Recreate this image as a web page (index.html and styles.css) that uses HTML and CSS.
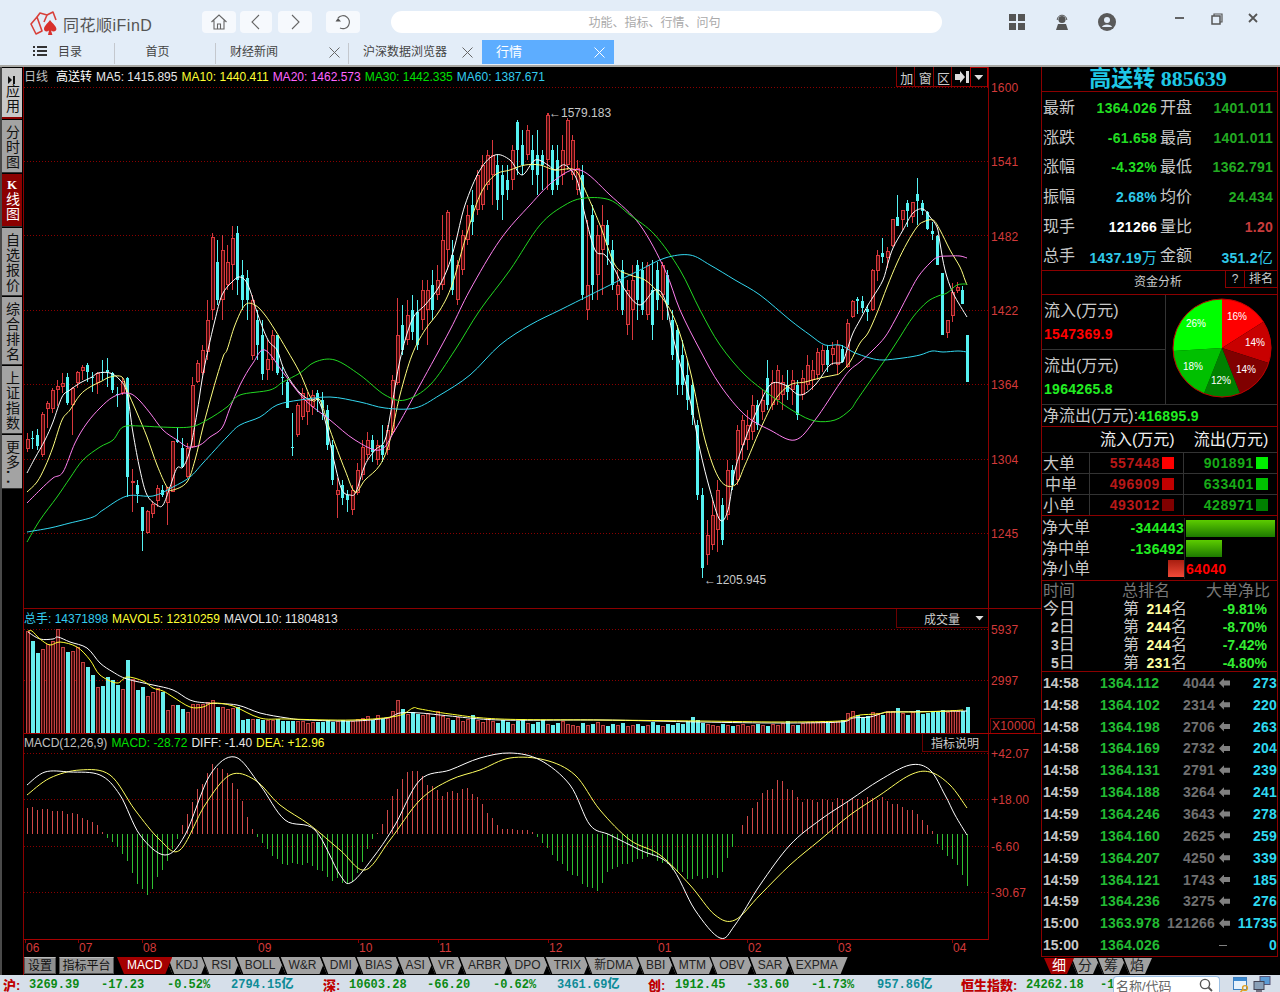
FILE: index.html
```html
<!DOCTYPE html>
<html lang="zh">
<head>
<meta charset="utf-8">
<title>同花顺iFinD</title>
<link rel="stylesheet" href="styles.css">
</head>
<body>
<div class="app">
  <header class="top">
    <div class="bar">
      <div class="brand">
        <svg class="logo" viewBox="0 0 28 24"><g fill="none" stroke="#d8403a" stroke-width="1.6" stroke-linejoin="round"><path d="M1 13 L7 6 L12 20 L6 23 Z"/><path d="M7 6 L10 2 L17 4 L14 11"/><path d="M17 4 L23 1 L26 9"/></g><path fill="#d8302c" d="M20 9 C17 13 14 15 14 18 C14 20.6 17 21.2 19 19.4 L18 24 H22.4 L21 19.4 C23 21.2 26.4 20.6 26.4 18 C26.4 15 23 13 20 9 Z"/></svg>
        <span class="brand-name">同花顺iFinD</span>
      </div>
      <button class="nav nav-home"><svg viewBox="0 0 18 18"><path d="M1.5 9 L9 2 L16.5 9 M4 7.5 V16 H14 V7.5 M7.5 16 V11 H10.5 V16" fill="none" stroke="#666" stroke-width="1.1"/></svg></button>
      <button class="nav nav-back"><svg viewBox="0 0 18 18"><path d="M12 2 L5 9 L12 16" fill="none" stroke="#666" stroke-width="1.1"/></svg></button>
      <button class="nav nav-fwd"><svg viewBox="0 0 18 18"><path d="M6 2 L13 9 L6 16" fill="none" stroke="#666" stroke-width="1.1"/></svg></button>
      <button class="nav nav-ref"><svg viewBox="0 0 18 18"><path d="M4 5 A6.5 6.5 0 1 1 6 15" fill="none" stroke="#666" stroke-width="1.2"/><path d="M1.5 8.5 L7 8.5 L4 5 Z" fill="#555"/></svg></button>
      <div class="search">功能、指标、行情、问句</div>
      <svg class="ico ico-grid" viewBox="0 0 16 16"><path fill="#555" d="M0 0h7v7H0zM9 0h7v7H9zM0 9h7v7H0zM9 9h7v7H9z"/></svg>
      <svg class="ico ico-help" viewBox="0 0 16 16"><circle cx="8" cy="5.5" r="3.6" fill="#555"/><path d="M3.2 6 A4.8 4.8 0 0 1 12.8 6" fill="none" stroke="#555"/><path fill="#555" d="M2 16 L4 10 H12 L14 16 Z"/></svg>
      <svg class="ico ico-user" viewBox="0 0 18 18"><circle cx="9" cy="9" r="9" fill="#5a5a5a"/><circle cx="9" cy="7" r="3" fill="#e3edf8"/><path fill="#e3edf8" d="M4 14 C4.5 10.5 13.5 10.5 14 14 Z"/></svg>
      <svg class="win win-min" viewBox="0 0 10 12"><path d="M0 6h10" stroke="#555" stroke-width="2"/></svg>
      <svg class="win win-res" viewBox="0 0 12 12"><path d="M3 3V1H11V9H9" fill="none" stroke="#555" stroke-width="1.2"/><rect x="1" y="3" width="8" height="8" fill="none" stroke="#555" stroke-width="1.5"/></svg>
      <svg class="win win-cls" viewBox="0 0 10 10"><path d="M1 1L9 9M9 1L1 9" stroke="#555" stroke-width="1.8"/></svg>
    </div>
    <nav class="tabs">
      <div class="t t-menu"><svg class="list" viewBox="0 0 14 12"><path fill="#333" d="M0 1h2v2H0zM4 1h10v2H4zM0 5h2v2H0zM4 5h10v2H4zM0 9h2v2H0zM4 9h10v2H4z"/></svg>目录</div>
      <div class="t t-home">首页</div>
      <div class="t t-x">财经新闻<svg class="x" viewBox="0 0 11 11"><path d="M.5 .5L10.5 10.5M10.5 .5L.5 10.5" stroke="#666"/></svg></div>
      <div class="t t-x">沪深数据浏览器<svg class="x" viewBox="0 0 11 11"><path d="M.5 .5L10.5 10.5M10.5 .5L.5 10.5" stroke="#666"/></svg></div>
      <div class="t t-x t-on">行情<svg class="x" viewBox="0 0 11 11"><path d="M.5 .5L10.5 10.5M10.5 .5L.5 10.5" stroke="#fff"/></svg></div>
    </nav>
  </header>

  <main class="body">
    <aside class="side">
      <div class="s s-app"><svg class="s-ic" viewBox="0 0 8 8"><path fill="#111" d="M0 0L4 4L0 8ZM5 0H7V8H5Z"/></svg><span class="vt">应用</span></div>
      <div class="s s-fs"><span class="vt">分时图</span></div>
      <div class="s s-k"><b class="k">K</b><span class="vt">线图</span></div>
      <div class="s s-4"><span class="vt">自选报价</span></div>
      <div class="s s-4"><span class="vt">综合排名</span></div>
      <div class="s s-4"><span class="vt">上证指数</span></div>
      <div class="s s-more"><span class="vt">更多</span><b class="dots">. .</b></div>
    </aside>

    <section class="center">
      <div class="pane pane-main">
        <div class="plot">
          <svg id="kline" class="chart" viewBox="24 67 964 541" width="964" height="541"></svg>
          <div class="phead phead-low"><span class="gy">日线</span><span class="wt name">高送转</span><span class="m lw">MA5: 1415.895</span><span class="m ly">MA10: 1440.411</span><span class="m lp">MA20: 1462.573</span><span class="m lg">MA30: 1442.335</span><span class="m lc">MA60: 1387.671</span></div>
          <div class="tools"><span class="tool">加</span><span class="tool">窗</span><span class="tool">区</span><span class="tool"><svg viewBox="0 0 14 12" width="14" height="12"><path fill="#ddd" d="M0 3H5V0L10 6L5 12V9H0ZM11 0H14V12H11Z"/></svg></span><span class="tool tool-dd"><i class="dd"></i></span></div>
          <span class="note note-hi">←1579.183</span>
          <span class="note note-lo">←1205.945</span>
        </div>
        <div class="axis ax-main"><span>1600</span><span>1541</span><span>1482</span><span>1422</span><span>1364</span><span>1304</span><span>1245</span></div>
      </div>
      <div class="pane pane-vol">
        <div class="plot">
          <svg id="vol" class="chart" viewBox="24 609 964 124" width="964" height="124"></svg>
          <div class="phead phead-low"><span class="lc">总手: 14371898</span><span class="m ly">MAVOL5: 12310259</span><span class="m lw">MAVOL10: 11804813</span></div>
          <div class="pick pick-vol">成交量<i class="dd"></i></div>
        </div>
        <div class="axis ax-vol"><span>5937</span><span>2997</span><span class="unit">X10000</span></div>
      </div>
      <div class="pane pane-macd">
        <div class="plot plot-end">
          <svg id="macd" class="chart" viewBox="24 734 964 205" width="964" height="205"></svg>
          <div class="phead"><span class="gy">MACD(12,26,9)</span><span class="m lg">MACD: -28.72</span><span class="m lw">DIFF: -1.40</span><span class="m ly">DEA: +12.96</span></div>
          <div class="pick pick-macd">指标说明</div>
        </div>
        <div class="axis ax-macd"><span>+42.07</span><span>+18.00</span><span>-6.60</span><span>-30.67</span></div>
      </div>
      <div class="dates"><span>06</span><span>07</span><span>08</span><span>09</span><span>10</span><span>11</span><span>12</span><span>01</span><span>02</span><span>03</span><span>04</span></div>
      <div class="itabs">
        <span class="ib">设置</span><span class="ib ib2">指标平台</span>
        <span class="it it-on">MACD</span><span class="it">KDJ</span><span class="it">RSI</span><span class="it">BOLL</span><span class="it">W&amp;R</span><span class="it">DMI</span><span class="it">BIAS</span><span class="it">ASI</span><span class="it">VR</span><span class="it">ARBR</span><span class="it">DPO</span><span class="it">TRIX</span><span class="it">新DMA</span><span class="it">BBI</span><span class="it">MTM</span><span class="it">OBV</span><span class="it">SAR</span><span class="it">EXPMA</span>
      </div>
    </section>

    <aside class="right">
      <div class="frame">
        <h1 class="title">高送转 885639</h1>
        <div class="quote">
          <div class="q"><span class="cn">最新</span><b class="g1">1364.026</b></div><div class="q"><span class="cn">开盘</span><b class="g2">1401.011</b></div>
          <div class="q"><span class="cn">涨跌</span><b class="g1">-61.658</b></div><div class="q"><span class="cn">最高</span><b class="g2">1401.011</b></div>
          <div class="q"><span class="cn">涨幅</span><b class="g1">-4.32%</b></div><div class="q"><span class="cn">最低</span><b class="g2">1362.791</b></div>
          <div class="q"><span class="cn">振幅</span><b class="cy">2.68%</b></div><div class="q"><span class="cn">均价</span><b class="g2">24.434</b></div>
          <div class="q"><span class="cn">现手</span><b class="wh">121266</b></div><div class="q"><span class="cn">量比</span><b class="rd">1.20</b></div>
          <div class="q"><span class="cn">总手</span><b class="cy">1437.19<span class="thin">万</span></b></div><div class="q"><span class="cn">金额</span><b class="cy">351.2<span class="thin">亿</span></b></div>
        </div>
        <div class="fundbar"><span class="fund">资金分析</span><span class="fb fb-q">?</span><span class="fb fb-r">排名</span></div>
        <div class="flow">
          <div class="flow-l">
            <div class="fl"><span class="cn">流入(万元)</span><b class="red">1547369.9</b></div>
            <div class="fl fl2"><span class="cn">流出(万元)</span><b class="grn">1964265.8</b></div>
          </div>
          <div class="flow-r">
            <svg class="pie" viewBox="0 0 100 100" width="100" height="100">
              <path fill="#ff0000" d="M50 50L50 1A49 49 0 0 1 91.4 23.7Z"/>
              <path fill="#c80000" d="M50 50L91.4 23.7A49 49 0 0 1 96.6 65.1Z"/>
              <path fill="#800000" d="M50 50L96.6 65.1A49 49 0 0 1 68 95.6Z"/>
              <path fill="#008000" d="M50 50L68 95.6A49 49 0 0 1 32 95.6Z"/>
              <path fill="#00c000" d="M50 50L32 95.6A49 49 0 0 1 1.1 53.1Z"/>
              <path fill="#00ff00" d="M50 50L1.1 53.1A49 49 0 0 1 50 1Z"/>
              <circle cx="50" cy="50" r="49" fill="none" stroke="#c00000"/>
              <text x="65" y="22" class="pt">16%</text><text x="83" y="48" class="pt">14%</text><text x="74" y="75" class="pt">14%</text><text x="49" y="86" class="pt">12%</text><text x="21" y="72" class="pt">18%</text><text x="24" y="29" class="pt">26%</text>
            </svg>
          </div>
        </div>
        <div class="net"><span class="cn">净流出(万元):</span><b class="grn">416895.9</b></div>
        <div class="heads"><span>流入(万元)</span><span>流出(万元)</span></div>
        <div class="tbl">
          <div class="tr"><span class="cn td0">大单</span><div class="td1"><b class="rdk">557448</b><i class="sq sq-r1"></i></div><div class="td2"><b class="gdk">901891</b><i class="sq sq-g1"></i></div></div>
          <div class="tr"><span class="cn td0 td-c">中单</span><div class="td1"><b class="rdk">496909</b><i class="sq sq-r2"></i></div><div class="td2"><b class="gdk">633401</b><i class="sq sq-g2"></i></div></div>
          <div class="tr"><span class="cn td0">小单</span><div class="td1"><b class="rdk">493012</b><i class="sq sq-r3"></i></div><div class="td2"><b class="gdk">428971</b><i class="sq sq-g3"></i></div></div>
        </div>
        <div class="nets">
          <div class="nr"><span class="cn nl">净大单</span><div class="nv"><b class="grn">-344443</b></div><div class="nb"><i class="nbar nbar-g nbar-lg"></i></div></div>
          <div class="nr"><span class="cn nl">净中单</span><div class="nv"><b class="grn">-136492</b></div><div class="nb"><i class="nbar nbar-g nbar-md"></i></div></div>
          <div class="nr"><span class="cn nl">净小单</span><div class="nv"><i class="nbar nbar-r"></i></div><div class="nb"><b class="red">64040</b></div></div>
        </div>
        <div class="rank">
          <div class="rh"><span>时间</span><span>总排名</span><span>大单净比</span></div>
          <div class="rr"><span class="r0">今日</span><span class="r1">第</span><b class="r2">214</b><span class="r3">名</span><b class="r4">-9.81%</b></div>
          <div class="rr"><span class="r0 rs"><b>2</b>日</span><span class="r1">第</span><b class="r2">244</b><span class="r3">名</span><b class="r4">-8.70%</b></div>
          <div class="rr"><span class="r0 rs"><b>3</b>日</span><span class="r1">第</span><b class="r2">244</b><span class="r3">名</span><b class="r4">-7.42%</b></div>
          <div class="rr"><span class="r0 rs"><b>5</b>日</span><span class="r1">第</span><b class="r2">231</b><span class="r3">名</span><b class="r4">-4.80%</b></div>
        </div>
        <div class="trades">
          <div class="tk"><b class="k0">14:58</b><b class="k1">1364.112</b><b class="k2">4044</b><i class="arw"></i><b class="k3">273</b></div>
          <div class="tk"><b class="k0">14:58</b><b class="k1">1364.102</b><b class="k2">2314</b><i class="arw"></i><b class="k3">220</b></div>
          <div class="tk"><b class="k0">14:58</b><b class="k1">1364.198</b><b class="k2">2706</b><i class="arw"></i><b class="k3">263</b></div>
          <div class="tk"><b class="k0">14:58</b><b class="k1">1364.169</b><b class="k2">2732</b><i class="arw"></i><b class="k3">204</b></div>
          <div class="tk"><b class="k0">14:58</b><b class="k1">1364.131</b><b class="k2">2791</b><i class="arw"></i><b class="k3">239</b></div>
          <div class="tk"><b class="k0">14:59</b><b class="k1">1364.188</b><b class="k2">3264</b><i class="arw"></i><b class="k3">241</b></div>
          <div class="tk"><b class="k0">14:59</b><b class="k1">1364.246</b><b class="k2">3643</b><i class="arw"></i><b class="k3">278</b></div>
          <div class="tk"><b class="k0">14:59</b><b class="k1">1364.160</b><b class="k2">2625</b><i class="arw"></i><b class="k3">259</b></div>
          <div class="tk"><b class="k0">14:59</b><b class="k1">1364.207</b><b class="k2">4250</b><i class="arw"></i><b class="k3">339</b></div>
          <div class="tk"><b class="k0">14:59</b><b class="k1">1364.121</b><b class="k2">1743</b><i class="arw"></i><b class="k3">185</b></div>
          <div class="tk"><b class="k0">14:59</b><b class="k1">1364.236</b><b class="k2">3275</b><i class="arw"></i><b class="k3">276</b></div>
          <div class="tk"><b class="k0">15:00</b><b class="k1">1363.978</b><b class="k2">121266</b><i class="arw"></i><b class="k3">11735</b></div>
          <div class="tk"><b class="k0">15:00</b><b class="k1">1364.026</b><b class="k2"></b><i class="dash"></i><b class="k3">0</b></div>
        </div>
      </div>
      <div class="rtabs"><span class="it it-on">细</span><span class="it">分</span><span class="it">筹</span><span class="it">焰</span></div>
    </aside>
  </main>

  <footer class="status">
    <div class="ticker">
      <b class="lab">沪:</b><b class="up">3269.39</b><b class="up">-17.23</b><b class="up">-0.52%</b><b class="amt">2794.15亿</b>
      <b class="lab">深:</b><b class="up">10603.28</b><b class="up">-66.20</b><b class="up">-0.62%</b><b class="amt">3461.69亿</b>
      <b class="lab">创:</b><b class="up">1912.45</b><b class="up">-33.60</b><b class="up">-1.73%</b><b class="amt">957.86亿</b>
      <b class="lab">恒生指数:</b><b class="up">24262.18</b><b class="up cut">-1</b>
    </div>
    <div class="code"><span>名称/代码</span><svg viewBox="0 0 14 14" width="14" height="14"><circle cx="6" cy="6" r="4.6" fill="none" stroke="#555" stroke-width="1.4"/><path d="M9.5 9.5L13 13" stroke="#555" stroke-width="1.8"/></svg></div>
    <svg class="tray tray-a" viewBox="0 0 16 16"><rect x=".5" y="1.5" width="13" height="12" fill="#e8f2fb" stroke="#3d7fc0"/><rect x="1" y="2" width="12" height="3" fill="#3d8ad0"/><circle cx="12" cy="12" r="2.4" fill="none" stroke="#e0a020" stroke-width="1.4"/><path d="M10 13.5L7.5 16" stroke="#e0a020" stroke-width="1.4"/></svg>
    <svg class="tray tray-b" viewBox="0 0 18 16"><rect x="7" y="0.5" width="10" height="8" fill="#5b9bd5" stroke="#557"/><rect x="1" y="5.5" width="10" height="8" fill="#8aa0b8" stroke="#445"/><path d="M3 15h6" stroke="#445" stroke-width="1.4"/></svg>
  </footer>
</div>
<script src="chart.js"></script>
</body>
</html>
```
FILE: styles.css
```css
* { box-sizing: border-box; }
html, body { margin: 0; padding: 0; background: #000; }
body { font-family: "Liberation Sans", "Noto Sans CJK SC", sans-serif; font-size: 12px; }
b, i { font-style: normal; }
.app { width: 1280px; height: 992px; display: flex; flex-direction: column; overflow: hidden; }

/* title bar */
.top { height: 67px; background: #e3edf8; border-bottom: 2px solid #a8a8a4; flex: none; }
.bar { height: 40px; padding-top: 11px; display: flex; align-items: flex-start; }
.brand { width: 172px; margin-left: 30px; display: flex; align-items: center; height: 24px; flex: none; }
.logo { width: 28px; height: 24px; flex: none; }
.brand-name { margin: 2px 0 0 5px; font-size: 16px; letter-spacing: .5px; color: #555; white-space: nowrap; }
.nav { height: 22px; padding: 0; border: 0; background: #f6f9fd; border-radius: 4px; display: flex; align-items: center; justify-content: center; flex: none; }
.nav svg { width: 18px; height: 18px; }
.nav-home { width: 34px; }
.nav-back { width: 32px; margin-left: 4px; }
.nav-fwd { width: 34px; margin-left: 6px; }
.nav-ref { width: 34px; margin-left: 14px; }
.search { width: 551px; height: 22px; margin-left: 31px; border-radius: 11px; background: #fff; color: #aaa; text-align: center; line-height: 24px; font-size: 12px; padding-right: 24px; flex: none; }
.ico { flex: none; }
.ico-grid { width: 16px; height: 16px; margin: 3px 0 0 67px; }
.ico-help { width: 16px; height: 16px; margin: 3px 0 0 29px; }
.ico-user { width: 18px; height: 18px; margin: 2px 0 0 28px; }
.win { flex: none; }
.win-min { width: 9px; height: 12px; margin: 1px 0 0 59px; }
.win-res { width: 12px; height: 12px; margin: 2px 0 0 27px; }
.win-cls { width: 10px; height: 10px; margin: 2px 0 0 25px; }
.tabs { height: 25px; display: flex; color: #444; font-size: 12px; }
.t { height: 24px; display: flex; align-items: center; position: relative; flex: none; padding-bottom: 3px; }
.t + .t::before { content: ""; position: absolute; left: -1px; top: 3px; bottom: 0; width: 1px; background: #c4c8ce; }
.t-menu { width: 115px; padding-left: 33px; }
.list { width: 14px; height: 12px; margin-right: 11px; }
.t-home { width: 101px; justify-content: center; padding-right: 16px; }
.t-x { width: 133px; padding: 0 9px 3px 14px; justify-content: space-between; }
.x { width: 11px; height: 11px; margin-top: 3px; }
.t-on { width: 132px; background: #5dadff; color: #fff; font-size: 13px; }
.t-on::before { display: none; }

/* body */
.body { flex: 1; display: flex; min-height: 0; background: #000; }
.side { width: 24px; flex: none; padding: 1px 1px 0 2px; border-right: 1px solid #8b0000; display: flex; flex-direction: column; gap: 1px; background: #000; box-shadow: inset 2px 0 0 #4a4a4a; }
.s { display: flex; flex-direction: column; align-items: center; background: #a3a3a3; color: #111; padding-top: 5px; border-bottom: 1px solid #333; font-size: 14px; }
.s-app { height: 51px; background: #c8c8c8; padding-top: 8px; border-bottom: 2px solid #8b0000; }
.s-ic { width: 8px; height: 8px; }
.s-fs { height: 53px; }
.s-k { height: 53px; background: #8b0000; color: #fff; padding-top: 4px; }
.s-4 { height: 68px; }
.s-more { height: 54px; }
.vt { writing-mode: vertical-rl; text-orientation: upright; letter-spacing: 1px; line-height: 20px; }
.k { font: bold 13px/14px "Liberation Serif", serif; }
.dots { writing-mode: vertical-rl; line-height: 14px; letter-spacing: 1px; }

.center { width: 1017px; flex: none; display: flex; flex-direction: column; }
.pane { display: flex; flex: none; }
.pane-main { height: 542px; border-bottom: 1px solid #8b0000; }
.pane-vol { height: 125px; border-bottom: 1px solid #a80000; }
.pane-macd { height: 206px; }
.plot { width: 964px; position: relative; flex: none; }
.plot-end { border-bottom: 1px solid #a80000; }
.chart { display: block; }
.axis { width: 53px; flex: none; border-left: 1px solid #8b0000; display: flex; flex-direction: column; align-items: flex-start; padding-left: 2px; color: #d33a3a; line-height: 14px; letter-spacing: .2px; }
.ax-main { padding-top: 14px; gap: 60.33px; }
.ax-vol { padding-top: 14px; }
.ax-vol span:nth-child(2) { margin-top: 37px; }
.unit { margin: auto 0 0 -1px; width: 45px; height: 15px; line-height: 14px; padding-left: 1px; border: 1px solid #6c0000; border-bottom: 0; }
.ax-macd { padding-top: 13px; gap: 32.33px; }

.phead { position: absolute; left: 0; top: 2px; line-height: 15px; white-space: nowrap; }
.phead-low { top: 3px; }
.m { margin-left: 4px; }
.name { margin-left: 8px; }
.gy { color: #c0c0c0; }
.wt { color: #fff; }
.lw { color: #e8e8e8; }
.ly { color: #ffff33; }
.lp { color: #ff66ff; }
.lg { color: #00e000; }
.lc { color: #33ccee; }
.tools { position: absolute; right: 0; top: 0; height: 20px; display: flex; border-bottom: 1px solid #8b0000; }
.tool { width: 18.4px; height: 20px; border-left: 1px solid #8b0000; color: #ccc; display: flex; align-items: center; justify-content: center; font-size: 13px; padding-left: 2px; }
.tool-dd { border: 1px solid #b00000; border-bottom: 0; padding-left: 0; }
.dd { display: block; width: 9px; height: 5px; background: #ddd; clip-path: polygon(0 0, 100% 0, 50% 100%); }
.note { position: absolute; color: #c8c8c8; line-height: 14px; }
.note-hi { left: 525px; top: 39px; }
.note-lo { left: 680px; top: 506px; }
.pick { position: absolute; right: 0; top: 0; border: 1px solid #6c0000; border-top: 0; border-right: 0; color: #ccc; display: flex; align-items: center; }
.pick-vol { width: 92px; height: 19px; padding-left: 27px; gap: 15px; }
.pick-macd { width: 66px; height: 18px; padding-left: 8px; }

.dates { height: 17px; display: grid; grid-template-columns: 53px 64px 115px 101px 80px 110px 109px 90px 90px 115px 40px; color: #d33a3a; line-height: 16px; }
.dates span { border-left: 1px solid #8b0000; margin-left: 1px; border-image: linear-gradient(#8b0000 4px, transparent 4px) 1; }
.itabs { height: 18px; display: flex; }
.ib { height: 17px; background: #8e8e8e; color: #111; line-height: 16px; border: 1px solid #555; border-top-color: #bbb; text-align: center; flex: none; }
.ib:first-child { width: 32px; margin-right: 3px; }
.ib2 { width: 55px; margin-right: 3px; background: #9a9a9a; }
.it { position: relative; height: 17px; line-height: 17px; padding: 0 10px; margin-left: -6.8px; background: #a2a2a2; color: #222; clip-path: polygon(0 0, 100% 0, calc(100% - 7px) 100%, 7px 100%); flex: none; }
.it::before { content: ""; position: absolute; left: 3px; top: -2px; bottom: -2px; width: 2px; background: #000; transform: skewX(21deg); }
.it-on { margin-left: 0; background: #a40000; color: #fff; z-index: 2; }
.it-on::before { display: none; }

/* right panel */
.right { width: 239px; flex: none; padding-right: 2px; display: flex; flex-direction: column; color: #ccc; }
.frame { height: 890px; border: 1px solid #8b0000; border-width: 0 1px 1px; display: flex; flex-direction: column; }
.title { margin: 0; height: 25px; flex: none; border-bottom: 1px solid #8b0000; padding-right: 3px; text-align: center; color: #1fc8e6; font: bold 22px/23px "Liberation Serif", "Noto Sans CJK SC", serif; white-space: nowrap; }
.cn { font-size: 16px; color: #c8c8c8; line-height: 20px; white-space: nowrap; }
.quote { height: 179px; flex: none; display: grid; grid-template-columns: 115px 116px; grid-auto-rows: 29.7px; padding: 1px 0 0 1px; border-bottom: 1px solid #8b0000; }
.q { display: flex; justify-content: space-between; align-items: center; font-size: 14px; padding-right: 1px; }
.q:nth-child(even) { padding-left: 2px; }
.q b { letter-spacing: .25px; }
.thin { font-weight: 400; font-size: 15px; }
.g1 { color: #22dd22; }
.g2 { color: #22aa22; }
.cy { color: #2fc8e8; }
.wh { color: #fff; }
.rd { color: #c83c3c; }
.fundbar { height: 24px; flex: none; display: flex; align-items: flex-start; border-bottom: 1px solid #8b0000; color: #ccc; }
.fund { width: 183px; padding-left: 49px; text-align: center; line-height: 22px; }
.fb { height: 17px; line-height: 16px; text-align: center; border: 1px solid #8b0000; border-top: 0; }
.fb-q { width: 20px; }
.fb-r { width: 32px; border-left: 0; border-right: 0; }
.flow { height: 109px; flex: none; display: flex; }
.flow-l { width: 124px; border-right: 1px solid #333; }
.fl { height: 54px; padding: 6px 0 0 2px; display: flex; flex-direction: column; gap: 5px; font-size: 14px; }
.fl2 { height: 55px; border-top: 1px solid #333; }
.red { color: #f00; font-size: 14px; letter-spacing: .3px; }
.grn { color: #22ee22; font-size: 14px; letter-spacing: .3px; }
.flow-r { flex: 1; display: flex; justify-content: center; align-items: center; padding: 0 0 3px 0; }
.pt { fill: #fff; font-size: 10px; text-anchor: middle; }
.net { height: 23px; flex: none; border-top: 1px solid #333; border-bottom: 1px solid #8b0000; display: flex; align-items: center; padding-left: 1px; white-space: nowrap; }
.heads { height: 25px; flex: none; display: flex; padding-left: 58px; gap: 19px; font-size: 16px; color: #eee; line-height: 25px; }
.tbl { flex: none; border-bottom: 1px solid #8b0000; }
.tr { height: 21px; display: flex; border-top: 1px solid #333; align-items: center; }
.td0 { width: 47px; padding: 1px 0 0 1px; }
.td-c { padding-left: 3px; }
.td1, .td2 { height: 100%; display: flex; justify-content: flex-end; align-items: center; border-left: 1px solid #333; font-size: 14px; letter-spacing: .6px; }
.td1 { width: 94px; padding-right: 9px; }
.td2 { flex: 1; padding-right: 9px; }
.rdk { color: #b81818; }
.gdk { color: #18aa18; }
.sq { width: 12px; height: 12px; margin-left: 2px; }
.sq-r1 { background: #f00; }
.sq-r2 { background: #c00000; }
.sq-r3 { background: #800000; }
.sq-g1 { background: #00f000; }
.sq-g2 { background: #00c000; }
.sq-g3 { background: #008000; }
.nets { height: 65px; flex: none; border-bottom: 1px solid #8b0000; padding-top: 2px; }
.nr { height: 20.4px; display: flex; align-items: center; }
.nl { width: 70px; }
.nv { width: 72px; height: 100%; display: flex; justify-content: flex-end; align-items: center; font-size: 14px; }
.nb { flex: 1; height: 100%; display: flex; align-items: center; border-left: 1px solid #222; font-size: 14px; padding-left: 1px; }
.nbar { display: block; height: 17px; }
.nbar-g { background: linear-gradient(#5ccc00, #1d7a00); }
.nbar-lg { width: 89px; }
.nbar-md { width: 36px; }
.nbar-r { width: 17px; margin-right: -1px; background: linear-gradient(#a81e10, #f04a38); }
.rank { height: 91px; flex: none; border-bottom: 1px solid #8b0000; padding-top: 1px; }
.rh { height: 18px; display: flex; color: #777; font-size: 16px; line-height: 18px; padding-left: 1px; }
.rh span:nth-child(2) { margin-left: 47px; }
.rh span:nth-child(3) { margin-left: 36px; }
.rr { height: 18px; display: flex; align-items: center; font-size: 16px; line-height: 18px; color: #c8c8c8; }
.r0 { width: 81px; padding-left: 1px; }
.rs { padding-left: 9px; }
.rs b { font-size: 14px; }
.r1 { width: 19px; }
.r2 { width: 29px; text-align: right; color: #ffffa0; font-size: 14px; letter-spacing: .4px; }
.r3 { width: 16px; }
.r4 { width: 80px; text-align: right; color: #33ee33; font-size: 14px; }
.trades { flex: 1; min-height: 0; display: flex; flex-direction: column; }
.tk { flex: 1; display: flex; align-items: center; font-size: 14px; padding-left: 1px; }
.k0 { width: 57px; color: #c8c8c8; }
.k1 { width: 62px; color: #22bb33; letter-spacing: .2px; }
.k2 { width: 53px; text-align: right; color: #707070; letter-spacing: .2px; }
.k3 { flex: 1; text-align: right; color: #2fd8f0; letter-spacing: .2px; }
.arw { display: block; width: 11px; height: 10px; margin-left: 4px; background: #808080; clip-path: polygon(0 50%, 45% 0, 45% 25%, 100% 25%, 100% 75%, 45% 75%, 45% 100%); }
.dash { display: block; width: 8px; height: 1px; margin-left: 4px; background: #808080; }
.rtabs { height: 18px; display: flex; padding: 1px 0 0 3px; font-size: 14px; }
.rtabs .it { padding: 0 8px; height: 16px; line-height: 15px; margin-left: -4px; }
.rtabs .it-on { margin-left: 0; }

/* status */
.status { height: 17px; flex: none; background: #d6dfea; display: flex; position: relative; overflow: hidden; }
.ticker { width: 1113px; flex: none; padding-left: 3px; display: grid; grid-template-columns: 26px 72px 66px 64px 92px 26px 78px 66px 64px 91px 27px 71px 65px 66px 84px 65px 74px 13px; font: bold 12px/21px "Liberation Mono", "Noto Sans CJK SC", monospace; white-space: nowrap; overflow: hidden; }
.lab { color: #c00000; font-family: "Liberation Sans", "Noto Sans CJK SC", sans-serif; font-size: 13px; }
.up { color: #0a8a14; }
.amt { color: #0e8c98; }
.code { width: 107px; height: 17px; margin-top: 1px; background: #fff; border: 1px solid #9cc0e4; border-bottom: 0; border-radius: 4px 4px 0 0; display: flex; justify-content: space-between; align-items: center; padding: 0 6px 0 2px; color: #666; font-size: 13px; }
.tray { flex: none; }
.tray-a { width: 16px; height: 16px; margin: 1px 0 0 13px; }
.tray-b { width: 18px; height: 16px; margin: 1px 0 0 4px; }
```
FILE: chart.js
```js
(function () {
  var NS = 'http://www.w3.org/2000/svg';
  function add(svg, tag, attrs) {
    var n = document.createElementNS(NS, tag);
    for (var k in attrs) n.setAttribute(k, attrs[k]);
    svg.appendChild(n);
    return n;
  }
  function rect(svg, x, y, w, h, fill, stroke) {
    var a = { x: x, y: y, width: w, height: h, fill: fill, 'shape-rendering': 'crispEdges' };
    if (stroke) { a.stroke = stroke; }
    add(svg, 'rect', a);
  }
  function grid(svg, ys) {
    ys.forEach(function (y) {
      add(svg, 'line', { x1: 24, x2: 988, y1: y + .5, y2: y + .5, stroke: '#8a0000', 'stroke-dasharray': '1 2', 'shape-rendering': 'crispEdges' });
    });
  }
  /* Catmull-Rom smoothing of the sampled points */
  function line(svg, pts, color) {
    var p = pts.split(' ').map(function (s) { return s.split(',').map(Number); });
    var d = 'M' + p[0][0] + ' ' + p[0][1];
    for (var i = 0; i < p.length - 1; i++) {
      var a = p[Math.max(i - 1, 0)], b = p[i], c = p[i + 1], e = p[Math.min(i + 2, p.length - 1)];
      d += 'C' + (b[0] + (c[0] - a[0]) / 6).toFixed(1) + ' ' + (b[1] + (c[1] - a[1]) / 6).toFixed(1) + ' ' +
        (c[0] - (e[0] - b[0]) / 6).toFixed(1) + ' ' + (c[1] - (e[1] - b[1]) / 6).toFixed(1) + ' ' + c[0] + ' ' + c[1];
    }
    add(svg, 'path', { d: d, fill: 'none', stroke: color, 'stroke-width': 1 });
  }

  var RED = '#d8383c', DARK = '#4a0c0c', CY = '#55f2f2';

  var candles = ('r 439 449 433 452|c 438 439 431 449|c 435 446 429 450|r 414 455 412 457|r 403 409 401 428|r 390 409 388 413|r 386 390 380 406|r 383 387 373 393|c 377 403 373 405|r 388 405 387 435|' +
    'r 372 383 371 388|r 367 371 365 380|c 365 372 363 382|c 377 378 372 392|r 373 383 372 394|c 372 373 360 380|c 370 372 358 387|c 373 390 372 393|c 394 395 387 407|r 381 393 378 395|' +
    'c 378 477 377 497|r 481 483 469 512|c 485 494 480 503|c 507 531 507 551|r 511 533 510 534|r 504 514 501 518|r 488 501 485 507|c 490 495 485 497|r 487 503 487 525|r 441 492 441 492|' +
    'c 440 442 428 443|c 448 467 438 468|r 448 477 443 478|r 385 447 377 448|r 363 382 360 383|r 350 373 345 375|r 320 352 300 360|r 237 310 233 320|c 262 300 240 305|r 250 300 235 320|' +
    'r 262 285 245 290|r 238 265 226 290|c 233 280 226 295|c 275 300 260 310|c 278 300 270 320|r 300 356 295 360|c 320 345 310 360|c 335 374 320 380|r 359 370 340 380|r 335 360 330 371|' +
    'c 335 373 335 375|c 377 378 367 395|c 382 408 380 408|c 447 448 413 456|r 405 435 403 437|r 393 417 388 420|r 400 412 392 425|r 395 407 390 415|c 393 400 390 412|c 400 408 392 420|' +
    'c 410 445 405 450|c 445 480 440 485|r 490 495 478 518|c 485 498 480 505|c 495 500 490 512|r 490 510 485 515|r 470 493 463 495|r 447 475 440 480|r 440 455 432 460|c 440 452 435 462|' +
    'r 445 460 440 465|c 445 455 425 462|r 430 450 425 455|r 380 432 375 435|r 335 383 298 385|c 325 350 305 355|r 315 340 300 345|c 310 332 295 340|c 312 345 300 350|r 290 320 280 330|' +
    'r 290 310 280 345|c 285 310 270 320|r 280 295 265 300|r 240 285 215 290|r 212 250 210 270|c 255 290 240 295|r 265 300 260 305|r 235 270 230 275|r 215 240 205 245|c 205 222 190 235|' +
    'r 175 210 170 215|r 165 205 155 210|r 155 185 150 190|r 155 175 140 205|c 165 200 155 210|c 175 195 165 220|c 180 190 165 200|r 150 180 145 190|c 122 150 120 175|c 145 165 130 175|' +
    'r 130 155 125 160|c 150 170 135 185|c 155 175 130 195|c 155 165 150 190|r 115 160 113 190|c 150 190 145 195|c 160 185 145 190|r 150 175 135 185|r 120 165 118 170|r 140 175 135 180|' +
    'r 168 190 160 195|c 175 295 165 300|r 285 310 220 320|c 215 285 205 300|r 235 275 225 300|r 225 250 205 295|c 225 245 220 265|c 250 285 240 290|r 285 295 270 310|c 270 310 260 315|' +
    'r 290 325 280 335|r 280 310 265 340|c 265 300 260 320|c 270 310 262 315|r 265 315 262 320|c 290 325 260 340|c 270 300 262 310|r 265 295 262 320|c 275 305 270 320|c 320 355 310 360|' +
    'c 330 385 325 395|c 355 385 340 395|c 375 400 360 410|c 385 415 380 425|c 425 495 420 500|c 495 568 488 578|r 535 555 520 565|r 515 545 500 550|r 490 530 480 552|c 505 540 498 545|' +
    'r 470 515 460 520|c 470 485 465 490|r 430 480 425 485|r 420 445 415 460|r 425 440 410 450|r 405 432 395 440|c 405 425 400 430|r 400 412 390 420|c 378 405 360 410|r 382 405 370 410|' +
    'r 370 400 365 405|r 382 395 375 410|c 385 392 370 400|r 380 390 370 405|c 385 415 380 420|r 378 395 370 400|r 365 385 355 390|r 370 380 360 390|r 352 375 348 380|r 350 365 345 372|' +
    'c 350 365 345 372|r 348 355 342 365|r 345 365 340 375|c 349 362 345 363|r 323 367 319 368|r 301 317 300 318|c 299 301 297 314|c 301 308 296 313|c 309 312 305 321|r 270 310 269 311|' +
    'r 255 271 250 281|c 253 257 238 263|r 251 258 247 268|r 219 246 219 247|c 217 226 195 226|r 210 220 210 230|c 203 211 200 227|r 202 217 202 223|c 194 201 178 225|c 203 211 200 215|' +
    'c 212 229 211 230|c 231 234 222 240|c 236 265 235 265|c 273 335 273 335|r 320 333 320 338|r 292 316 283 322|r 287 291 282 293|c 290 304 286 304|c 335 382 335 382').split('|').map(function (s) {
      var p = s.split(' ');
      return { up: p[0] === 'r', t: +p[1], b: +p[2], h: +p[3], l: +p[4] };
    });

  /* K-line pane */
  var k = document.getElementById('kline');
  grid(k, [87, 161, 235, 310, 384, 459, 533]);
  candles.forEach(function (c, i) {
    var x = 27 + 5 * i;
    rect(k, x, c.h, 1, c.l - c.h, c.up ? RED : CY);
    if (c.up) {
      rect(k, x - 1, c.t + .5, 3, Math.max(c.b - c.t - 1, 1), DARK, RED);
    } else {
      rect(k, x - 1, c.t, 3, Math.max(c.b - c.t, 1), CY);
    }
  });
  rect(k, 548, 113, 1, 3, RED);
  line(k, '27,473 35,458 45,440 53,422 62,397 70,390 80,383 92,377 98,373 110,373 120,380 127,393 133,433 140,470 147,495 157,505 163,505 170,487 177,468 183,467 190,450 197,413 202,380 208,350 215,320 222,295 232,282 240,277 248,285 258,315 268,340 277,350 283,367 290,380 300,393 310,400 318,400 325,420 335,465 342,490 350,495 356,492 365,465 375,450 385,440 392,405 400,360 412,320 425,305 437,290 447,270 455,245 465,205 480,170 495,155 510,160 522,175 535,160 548,165 555,170 565,165 577,180 585,215 595,250 605,255 615,270 625,290 640,305 655,290 665,300 675,345 690,400 700,450 710,490 720,520 728,510 735,470 745,440 755,415 770,385 785,385 800,395 815,385 830,365 842,362 847,350 853,333 860,320 868,305 873,297 883,280 888,263 893,248 903,230 913,213 923,209 930,217 937,227 940,243 945,270 953,293 967,317', '#fff');
  line(k, '27,492 37,482 45,467 53,447 62,420 70,410 80,395 90,387 102,381 110,377 122,377 127,390 137,413 147,437 157,465 167,487 173,490 187,482 195,460 203,427 213,390 223,357 227,350 235,325 245,305 255,305 265,315 275,330 287,350 300,373 312,400 320,400 330,430 345,470 355,492 365,480 380,465 390,440 400,395 412,355 425,330 440,310 452,285 465,240 480,195 495,175 510,170 525,165 540,165 555,170 575,170 585,190 600,225 615,265 630,275 645,280 660,295 675,320 690,370 705,440 720,480 735,485 745,465 760,430 775,400 790,385 805,382 820,378 835,375 840,373 850,362 860,343 868,333 877,313 887,287 897,263 907,243 917,227 923,222 933,220 940,230 950,250 960,267 965,280 967,285', '#ffff80');
  line(k, '27,503 40,490 53,478 63,472 75,443 87,423 100,408 113,397 127,393 137,398 150,413 163,430 177,440 188,447 200,445 210,437 222,428 230,408 240,385 253,363 265,350 285,375 305,400 330,420 355,440 380,450 395,430 420,385 450,330 470,290 500,240 530,205 555,180 580,170 610,195 640,225 665,270 680,310 700,350 720,385 745,415 770,430 795,440 815,420 840,383 850,370 860,362 873,350 885,337 895,320 907,297 918,277 930,263 938,257 950,256 960,256 967,258', '#ff80f0');
  line(k, '27,542 40,520 57,497 70,478 83,460 100,447 113,440 123,427 140,426 160,427 190,427 207,420 227,407 240,395 270,390 283,382 300,373 315,362 335,360 360,375 385,395 405,400 430,385 455,350 480,310 510,270 540,225 565,205 585,198 610,200 630,215 655,235 680,270 700,310 720,345 745,375 770,395 795,412 815,421 835,420 850,410 857,400 873,377 887,357 900,337 913,317 927,302 938,296 947,293 957,285 967,284', '#22d822');
  line(k, '27,532 50,528 70,523 93,517 103,510 127,496 153,496 173,487 190,477 203,463 227,437 240,425 260,417 277,405 300,400 330,397 360,402 385,408 415,408 440,395 470,375 500,345 530,325 560,310 590,295 610,285 640,270 665,258 690,255 710,265 735,280 760,295 790,320 810,335 825,345 840,345 853,352 870,358 883,360 903,358 920,355 932,351 943,352 958,351 967,352', '#33d8f0');

  /* volume pane */
  var v = document.getElementById('vol');
  grid(v, [629, 680]);
  var top1 = [90,122,158,145,130,122,85,138,155,152,140,185,200,222,258,255,228,238,252,265,178,235,268,258,285,275,262,275,328,312,312,325,335,310,310,310,305,298,318,318,325,322,318,358,355,355,355,358,357,357,356,360,360,360,362,362,367,363,365,363,358,363,362,358,362,360,355,352,347,358,342,355,352,332,298,325,340,335,340];
  var mid = [18,20,16,22,17,15,13,16,12,14,18,13,11,15,12,10,13,11,9,12,14,10,9,11,13,9,8,10,12,9,8,7,10,8,9,11,8,7,9,8,10,7,8,9,7,8,11,8,7,9,8,10,9,12,16,13,10,9,8,7,9,8,7,8,9,7,8,9,8,7,9,8];
  var top2 = [368,360,372,372,368,363,365,365,360,368,365,360,358,338,330,342,348,345,333,337,342,330,330,323,338,342,335,327,340,338,332,335,327,333,328,332,330,318];
  var heights = top1.map(function (t) { return (397 - t) / 3; }).concat(mid, top2.map(function (t) { return (397 - t) / 3; }));
  heights.forEach(function (h, i) {
    var x = 26 + 5 * i, H = Math.max(Math.round(h), 2), y = 733 - H, up = candles[i].up;
    if (up) rect(v, x + .5, y + .5, 3, H, DARK, '#c04040');
    else rect(v, x, y, 4, H, '#66eeee');
  });
  line(v, '28,632 40,639 53,639 58,637 70,642 87,648 100,663 113,672 127,679 153,685 173,690 190,700 207,703 237,705 260,713 287,718 307,720 353,721 387,718 400,713 420,713 450,716 500,720 600,720 700,722 780,723 840,722 853,718 870,717 883,713 893,712 967,711', '#fff');
  line(v, '28,631 32,631 40,639 50,645 60,642 77,647 90,660 100,675 117,683 127,677 143,681 153,688 163,691 173,697 190,707 203,707 213,703 233,706 260,718 287,719 353,720 397,716 413,708 420,709 450,714 500,719 600,720 700,721 780,722 840,721 850,718 860,715 877,714 890,712 920,712 947,711 963,710', '#ffff30');

  /* MACD pane */
  var m = document.getElementById('macd');
  grid(m, [753, 799, 846, 892]);
  var keys = [[27,26],[50,24],[75,20],[100,8],[103,-1],[120,-15],[145,-64],[160,-40],[178,-3],[183,12],[200,50],[215,72],[235,50],[252,5],[258,-5],[280,-30],[310,-30],[330,-45],[352,-50],[372,-5],[380,5],[395,45],[412,66],[440,40],[470,45],[500,5],[530,4],[536,-2],[560,-30],[595,-59],[610,-35],[650,-22],[690,-45],[720,-42],[735,-5],[738,3],[760,38],[780,54],[800,34],[830,34],[880,36],[915,22],[932,3],[937,-10],[950,-25],[958,-30],[967,-54]];
  function hist(x) {
    for (var j = 1; j < keys.length; j++) {
      if (x <= keys[j][0]) {
        var a = keys[j - 1], b = keys[j];
        return a[1] + (b[1] - a[1]) * (x - a[0]) / (b[0] - a[0]);
      }
    }
    return 0;
  }
  for (var i = 0; i < 189; i++) {
    var x = 27 + 5 * i, h = hist(x) * (1 + .05 * Math.sin(i * 2.1));
    if (h >= 0) rect(m, x, 834 - h, 1, h, '#d04848');
    else rect(m, x, 834, 1, -h, '#30c030');
  }
  line(m, '27,795 50,778 80,770 110,775 135,810 160,840 180,850 205,805 230,775 255,780 280,805 310,825 340,850 365,870 390,840 420,800 450,780 480,770 510,758 545,760 575,775 600,810 630,840 660,855 690,885 715,915 735,920 760,895 790,865 820,840 850,815 880,795 910,775 930,772 950,785 967,808', '#ffff60');
  line(m, '27,785 45,772 70,772 100,775 120,795 140,835 165,855 185,835 210,775 235,757 260,785 285,820 315,830 340,875 352,882 375,855 395,825 420,780 450,770 480,758 510,753 540,760 570,785 590,825 610,835 640,850 670,865 695,910 720,938 735,925 760,885 790,845 820,820 850,800 880,780 910,765 930,770 945,795 955,815 967,835', '#fff');
})();
```
